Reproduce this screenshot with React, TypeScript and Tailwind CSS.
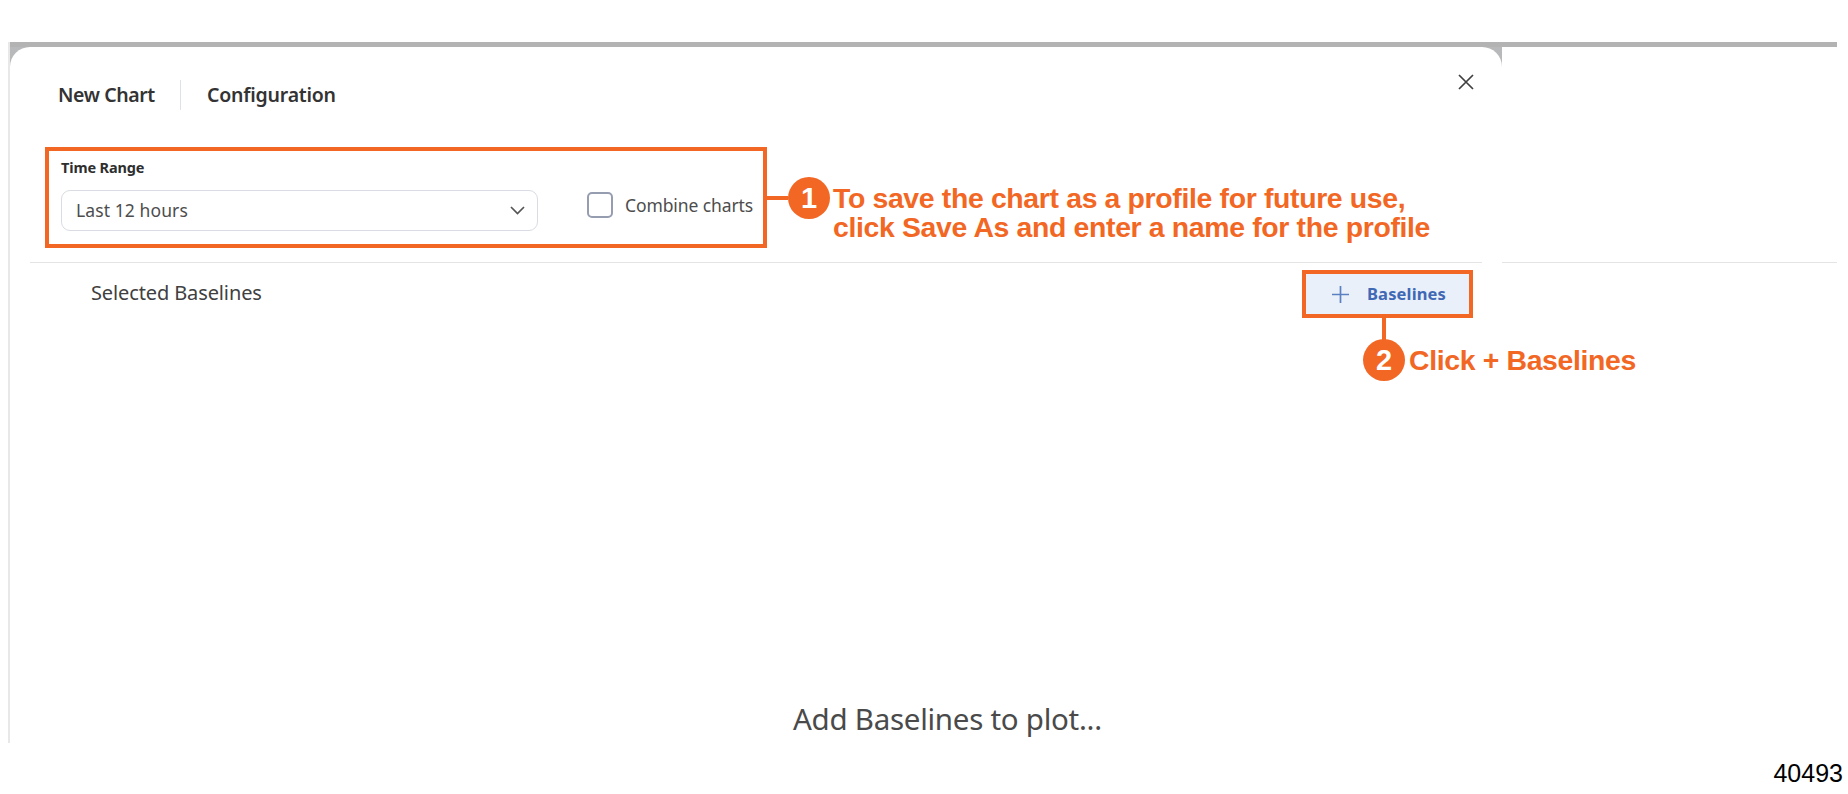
const sans = "font-['Noto_Sans','Open_Sans',sans-serif]";
const arial = "font-['Liberation_Sans',Arial,sans-serif]";

function Header() {
  return (
    <header className="flex h-[100px] items-start justify-between pl-[48px] pr-[28px]">
      <div className="flex items-center pt-[33px] text-[19.5px] leading-[30px] font-semibold text-[#333333]">
        <h1 className="w-[122px] whitespace-nowrap tracking-[-0.4px]">New Chart</h1>
        <span className="h-[30px] w-px bg-[#dfe1ea]" />
        <h2 className="ml-[26px] whitespace-nowrap tracking-[-0.22px]">Configuration</h2>
      </div>
      <button aria-label="Close" className="mt-[27px]">
        <svg width="16" height="16" viewBox="0 0 16 16" fill="none" stroke="#404040" strokeWidth="1.7">
          <path d="M1 1 15 15M15 1 1 15" />
        </svg>
      </button>
    </header>
  );
}

function Filters() {
  return (
    <section className="flex h-[115px] pl-[51px]">
      <div className="pt-[9px]">
        <label className="block h-[34px] text-[14.5px] leading-[22px] font-bold tracking-[-0.15px] text-[#2e2e2e]">
          Time Range
        </label>
        <div className="flex h-[41px] w-[477px] items-center justify-between rounded-[9px] border-[1.5px] border-[#dadce3] pl-[14px] pr-[12px]">
          <span className="text-[17.5px] tracking-[0.1px] text-[#4d4d4d]">Last 12 hours</span>
          <svg width="15" height="9" viewBox="0 0 15 9" fill="none" stroke="#555555" strokeWidth="1.7">
            <path d="M1 1 7.5 7.5 14 1" />
          </svg>
        </div>
      </div>
      <label className="ml-[49px] mt-[45px] flex h-[26px] items-center gap-[12px] self-start">
        <span className="size-[26px] rounded-[5px] border-2 border-[#969db0]" />
        <span className="whitespace-nowrap text-[17.5px] tracking-[-0.1px] text-[#4d4d4d]">Combine charts</span>
      </label>
    </section>
  );
}

function Baselines() {
  return (
    <section className="ml-[20px] mr-[20px] border-t-[1.5px] border-[#e4e4e4]">
      <div className="flex items-start justify-between pl-[61px] pr-[10px]">
        <h3 className="pt-[15px] text-[20px] leading-[30px] tracking-[-0.12px] text-[#404040]">Selected Baselines</h3>
        <button className="mt-[8px] flex h-[46px] w-[168px] items-center rounded-[6px] bg-[#eaf0fa] pl-[28px] text-[16.5px] font-bold tracking-[0.15px] text-[#3f69b5]">
          <svg className="mr-[18px]" width="17" height="17" viewBox="0 0 17 17" fill="none" stroke="#5b80c2" strokeWidth="1.7">
            <path d="M8.5 0v17M0 8.5h17" />
          </svg>
          Baselines
        </button>
      </div>
      <p className="pl-[763px] pt-[382px] text-[29.5px] leading-[40px] tracking-[-0.27px] text-[#4a4a4a]">
        Add Baselines to plot...
      </p>
    </section>
  );
}

function Badge({ value }: { value: number }) {
  return (
    <span className="flex size-[42px] shrink-0 items-center justify-center rounded-full bg-[#f26724] text-[29px] leading-none text-white">
      {value}
    </span>
  );
}

// Numbered callouts drawn over the dialog
function Callouts() {
  return (
    <div className={`${arial} text-[28.4px] leading-[29px] font-bold tracking-[-0.34px] text-[#f26724]`}>
      <div className="absolute top-[147px] left-[45px] h-[101px] w-[722px] border-[4px] border-[#f26724]" />
      <div className="absolute top-[177px] left-[766px] flex items-start">
        <span className="mt-[19px] h-[4px] w-[22px] bg-[#f26724]" />
        <Badge value={1} />
        <p className="ml-[3px] mt-[7px] whitespace-nowrap">
          To save the chart as a profile for future use,
          <br />
          click Save As and enter a name for the profile
        </p>
      </div>
      <div className="absolute top-[270px] left-[1302px] h-[48px] w-[171px] border-[4px] border-[#f26724]" />
      <div className="absolute top-[318px] left-[1363px]">
        <span className="ml-[19px] block h-[22px] w-[4px] bg-[#f26724]" />
        <div className="-mt-px flex items-center">
          <Badge value={2} />
          <p className="ml-[4px] whitespace-nowrap">Click + Baselines</p>
        </div>
      </div>
    </div>
  );
}

export default function App() {
  return (
    <main className={`${sans} relative h-[794px] w-[1848px] overflow-hidden bg-white pt-[42px]`}>
      <div className="ml-[8px] h-[701px] w-[1829px] border-l-2 border-[#e8e8e8]">
        <div className="h-[5px] bg-[#b3b3b3]" />
        <div className="flex h-[696px]">
          <div className="w-[1492px] bg-[#b8b9ba]">
            <div className="h-full rounded-t-[20px] bg-white">
              <Header />
              <Filters />
              <Baselines />
            </div>
          </div>
          <div className="flex-1 pt-[215px]">
            <div className="border-t-[1.5px] border-[#e4e4e4]" />
          </div>
        </div>
      </div>
      <p className={`${arial} pr-[5px] pt-[8px] text-right text-[25px] leading-[44px] text-black`}>40493</p>
      <Callouts />
    </main>
  );
}
